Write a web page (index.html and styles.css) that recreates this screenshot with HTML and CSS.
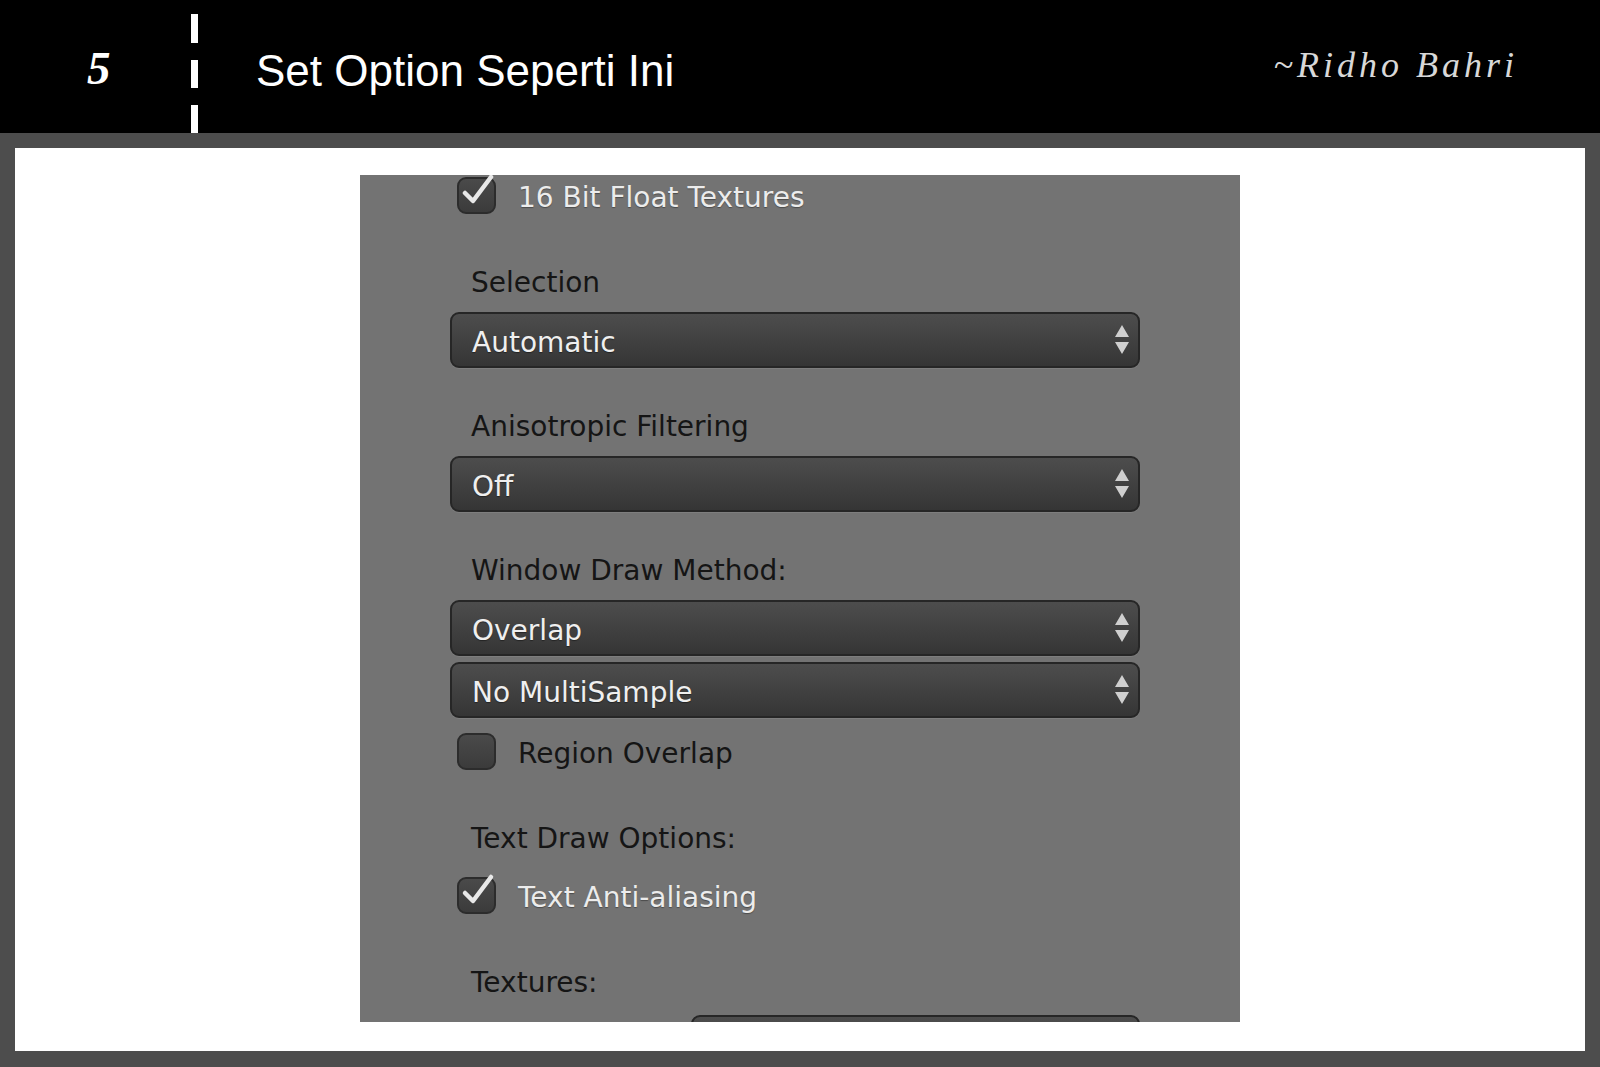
FILE: index.html
```html
<!DOCTYPE html>
<html lang="id">
<head>
<meta charset="utf-8">
<title>Set Option Seperti Ini</title>
<link rel="stylesheet" href="styles.css">
</head>
<body>
<header class="header">
  <div class="step">5</div>
  <div class="divider"><span class="dash"></span><span class="dash"></span><span class="dash"></span></div>
  <h1 class="title">Set Option Seperti Ini</h1>
  <div class="author">~Ridho Bahri</div>
</header>
<main class="frame">
  <div class="sheet">
    <section class="panel">
      <div class="check first">
        <span class="box"><svg class="tick" viewBox="0 0 40 40"><path d="M7 21 L15 29 L33 5" fill="none" stroke="#e8e8e8" stroke-width="4.5" stroke-linecap="round" stroke-linejoin="round"/></svg></span>
        <span class="check-text light">16 Bit Float Textures</span>
      </div>
      <div class="label after-check">Selection</div>
      <div class="select"><span>Automatic</span><svg class="arrows" viewBox="0 0 16 30"><path d="M8 0 L15 12 L1 12 Z M1 17 L15 17 L8 29 Z" fill="#cfcfcf"/></svg></div>
      <div class="label">Anisotropic Filtering</div>
      <div class="select"><span>Off</span><svg class="arrows" viewBox="0 0 16 30"><path d="M8 0 L15 12 L1 12 Z M1 17 L15 17 L8 29 Z" fill="#cfcfcf"/></svg></div>
      <div class="label">Window Draw Method:</div>
      <div class="select"><span>Overlap</span><svg class="arrows" viewBox="0 0 16 30"><path d="M8 0 L15 12 L1 12 Z M1 17 L15 17 L8 29 Z" fill="#cfcfcf"/></svg></div>
      <div class="select tight"><span>No MultiSample</span><svg class="arrows" viewBox="0 0 16 30"><path d="M8 0 L15 12 L1 12 Z M1 17 L15 17 L8 29 Z" fill="#cfcfcf"/></svg></div>
      <div class="check after-select">
        <span class="box"></span>
        <span class="check-text dark">Region Overlap</span>
      </div>
      <div class="label after-check">Text Draw Options:</div>
      <div class="check after-label">
        <span class="box"><svg class="tick" viewBox="0 0 40 40"><path d="M7 21 L15 29 L33 5" fill="none" stroke="#e8e8e8" stroke-width="4.5" stroke-linecap="round" stroke-linejoin="round"/></svg></span>
        <span class="check-text light">Text Anti-aliasing</span>
      </div>
      <div class="label after-check">Textures:</div>
      <div class="select short"></div>
    </section>
  </div>
</main>
</body>
</html>
```

FILE: styles.css
```css
* { box-sizing: border-box; }
html, body { margin: 0; padding: 0; }
body {
  width: 1600px;
  height: 1067px;
  background: #4d4d4d;
  overflow: hidden;
  font-family: "Liberation Sans", Arial, sans-serif;
}
.header {
  height: 133px;
  background: #000;
  display: flex;
  align-items: center;
}
.step {
  margin-left: 87px;
  width: 104px;
  font-family: "Liberation Serif", "Times New Roman", serif;
  font-weight: bold;
  font-style: italic;
  font-size: 47px;
  color: #fff;
  line-height: 1;
  padding-top: 4px;
}
.divider {
  align-self: stretch;
  width: 7px;
  display: flex;
  flex-direction: column;
  gap: 17px;
  padding-top: 14px;
}
.dash { display: block; height: 28px; background: #fff; }
.dash:first-child { height: 29px; }
.title {
  margin: 0 0 0 58px;
  font-weight: normal;
  font-size: 44px;
  color: #fff;
  line-height: 1;
  flex: 1;
  padding-top: 8px;
}
.author {
  margin-right: 82px;
  font-family: "Liberation Serif", "Times New Roman", serif;
  font-style: italic;
  font-size: 36px;
  letter-spacing: 4px;
  color: #d8d8d8;
  line-height: 1;
  padding-bottom: 4px;
}
.frame {
  padding: 15px 15px 16px 15px;
  height: 934px;
}
.sheet {
  background: #fff;
  height: 903px;
  display: flex;
  justify-content: center;
  padding-top: 27px;
}
.panel {
  width: 880px;
  height: 847px;
  background: #737373;
  overflow: hidden;
  display: flex;
  flex-direction: column;
  font-family: "DejaVu Sans", sans-serif;
  font-size: 28px;
}
.check {
  display: flex;
  align-items: center;
  height: 36px;
  margin-left: 97px;
}
.check.first { margin-top: 2px; }
.check.after-select { margin-top: 15px; }
.check.after-label { margin-top: 19px; }
.box {
  position: relative;
  width: 39px;
  height: 37px;
  border-radius: 9px;
  background: linear-gradient(#4a4a4a, #3b3b3b);
  border: 2px solid #2c2c2c;
  flex: none;
}
.tick {
  position: absolute;
  left: -1px;
  top: -7px;
  width: 40px;
  height: 40px;
  overflow: visible;
}
.check-text { margin-left: 22px; line-height: 36px; padding-top: 6px; }
.light { color: #ececec; text-shadow: 0 1px 1px rgba(0,0,0,0.35); }
.dark { color: #151515; }
.label {
  margin-left: 111px;
  height: 40px;
  line-height: 40px;
  padding-top: 1px;
  color: #151515;
  margin-top: 38px;
}
.label.after-check { margin-top: 49px; }
.select {
  margin-left: 90px;
  width: 690px;
  height: 56px;
  flex: none;
  margin-top: 10px;
  border-radius: 9px;
  border: 2px solid #262626;
  background: linear-gradient(#4d4d4d, #353535);
  display: flex;
  align-items: center;
  justify-content: space-between;
  padding: 4px 8px 0 20px;
  color: #efefef;
  text-shadow: 0 1px 1px rgba(0,0,0,0.4);
  box-shadow: 0 1px 0 rgba(255,255,255,0.08);
}
.select.tight { margin-top: 6px; }
.select.short { margin-left: 331px; width: 449px; margin-top: 13px; }
.arrows { width: 16px; height: 30px; margin-top: -4px; }
```
